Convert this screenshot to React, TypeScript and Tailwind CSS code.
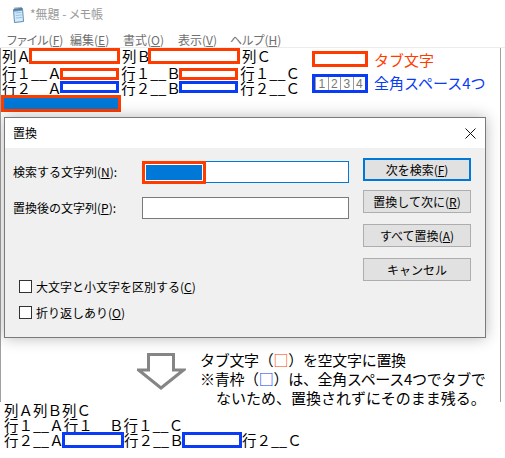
import type { ReactNode } from 'react'

const RED = 'border-[#ff3c00]'

function NotepadIcon() {
  return (
    <svg width="15" height="17" viewBox="0 0 15 17" aria-hidden="true">
      <path d="M3.5 3.5 L12.5 2.5 L13.5 15.5 L4.5 16.5 Z" fill="#d4ecfa" stroke="#5b8db5" />
      <path d="M5.5 7 L11.5 6.4 M5.7 9.5 L11.7 8.9 M5.9 12 L11.9 11.4" stroke="#8ab4d4" strokeWidth="0.8" />
      <path d="M3.5 3.5 L12.5 2.5 L12.7 4.8 L3.7 5.8 Z" fill="#6f9cc2" />
      <path d="M5 1.5 V4.5 M7 1.3 V4.3 M9 1.1 V4.1 M11 0.9 V3.9" stroke="#38566f" strokeWidth="0.9" />
    </svg>
  )
}

function CloseIcon() {
  return (
    <svg width="11" height="11" viewBox="0 0 11 11" aria-hidden="true">
      <path d="M0.5 0.5 L10.5 10.5 M10.5 0.5 L0.5 10.5" stroke="#111" strokeWidth="1" />
    </svg>
  )
}

function DownArrow() {
  return (
    <svg width="49" height="37" viewBox="0 0 49 37" aria-hidden="true">
      <path d="M11.5 1.5 H36.5 V17 H46.5 L24 35 L1.5 17 H11.5 Z" fill="none" stroke="#858585" strokeWidth="3" strokeLinejoin="miter" />
    </svg>
  )
}

function Button({ children, primary }: { children: ReactNode; primary?: boolean }) {
  return (
    <div
      className={
        primary
          ? 'flex h-[23px] w-[108px] items-center justify-center border-2 border-[#0078d7] bg-[#e1e1e1] text-[12px]'
          : 'flex h-[23px] w-[108px] items-center justify-center border border-[#adadad] bg-[#e1e1e1] text-[12px]'
      }
    >
      {children}
    </div>
  )
}

function Checkbox({ children }: { children: ReactNode }) {
  return (
    <div className="flex h-[13px] items-center pl-[14px] text-[12px]">
      <span className="h-[13px] w-[13px] border border-[#333] bg-white" />
      <span className="ml-[4px]">{children}</span>
    </div>
  )
}

export default function App() {
  return (
    <div className="h-[458px] w-[505px] overflow-hidden bg-white font-['Noto_Sans_CJK_JP','Liberation_Sans',sans-serif] text-black">
      {/* title bar */}
      <div className="flex h-[28px] items-center pl-[10px]">
        <NotepadIcon />
        <span className="ml-[5px] text-[12px] text-[#9a9a9a] [font-feature-settings:'palt']">*無題 - メモ帳</span>
      </div>

      {/* menu */}
      <div className="flex h-[20px] items-end border-b border-[#ececec] pl-[7px] text-[12px] leading-[15px] whitespace-nowrap text-[#707070] [font-feature-settings:'palt']">
        <span className="w-[63px]">ファイル(<u>F</u>)</span>
        <span className="w-[53px]">編集(<u>E</u>)</span>
        <span className="w-[55px]">書式(<u>O</u>)</span>
        <span className="w-[52px]">表示(<u>V</u>)</span>
        <span>ヘルプ(<u>H</u>)</span>
      </div>

      {/* editor area */}
      <div className="flex h-[354px] w-[501px] flex-col border-x border-[#a0a0a0]">
        <div className="flex shrink-0">
          <div className="flex w-[299px] shrink-0 flex-col text-[14.5px] whitespace-nowrap">
            <div className="flex h-[17px] items-center leading-none">
              <span className="w-[28px] pl-[1px]">列Ａ</span>
              <span className={`h-[16px] w-[91px] self-start border-[3px] ${RED}`} />
              <span className="w-[28px] pl-[2px]">列Ｂ</span>
              <span className={`h-[16px] w-[92px] self-start border-[3px] ${RED}`} />
              <span className="pl-[2px]">列Ｃ</span>
            </div>
            <div className="flex h-[15px] leading-[15px]">
              <span className="w-[59px] pl-[1px]">行１__Ａ</span>
              <span className={`mt-[3px] h-[12px] w-[60px] border-[3px] ${RED}`} />
              <span className="w-[60px] pl-[2px]">行１__Ｂ</span>
              <span className={`mt-[3px] h-[12px] w-[60px] border-[3px] ${RED}`} />
              <span className="pl-[2px]">行１__Ｃ</span>
            </div>
            <div className="flex h-[15px] leading-[15px]">
              <span className="w-[59px] pl-[1px]">行２__Ａ</span>
              <span className="mt-[1px] h-[12px] w-[60px] border-[3px] border-[#0a3cf5]" />
              <span className="w-[60px] pl-[2px]">行２__Ｂ</span>
              <span className="mt-[1px] h-[12px] w-[60px] border-[3px] border-[#0a3cf5]" />
              <span className="pl-[2px]">行２__Ｃ</span>
            </div>
            <div className="flex h-[17px]">
              <span className={`h-[17px] w-[120px] border-[3px] ${RED} bg-[#0078d7]`} />
            </div>
          </div>

          {/* legend */}
          <div className="flex flex-col pl-[12px] pt-[3px] whitespace-nowrap">
            <div className="flex h-[16px] items-center">
              <span className={`h-[16px] w-[56px] border-[3px] ${RED}`} />
              <span className="ml-[6px] pt-[3px] text-[15px] text-[#ff3c00]">タブ文字</span>
            </div>
            <div className="mt-[7px] flex h-[19px] items-center">
              <span className="flex h-[19px] w-[56px] border-[3px] border-[#0a3cf5] bg-white">
                {['1', '2', '3', '4'].map((d) => (
                  <span
                    key={d}
                    className="flex flex-1 items-center justify-center border-l border-[#9a9a9a] font-['Liberation_Sans',sans-serif] text-[12px] leading-none text-[#777]"
                  >
                    {d}
                  </span>
                ))}
              </span>
              <span className="ml-[6px] text-[15px] text-[#0a3cf5]">全角スペース4つ</span>
            </div>
          </div>
        </div>

        {/* replace dialog */}
        <div className="ml-[3px] mt-[5px] flex h-[221px] w-[482px] shrink-0 flex-col border border-[#7a7a7a] bg-[#f0f0f0] shadow-[0_0_14px_rgba(0,0,0,0.28)]">
          <div className="flex h-[30px] shrink-0 items-center justify-between bg-white pl-[8px] pr-[9px] text-[12px]">
            <span>置換</span>
            <CloseIcon />
          </div>
          <div className="flex flex-1">
            <div className="flex w-[358px] flex-col">
              <div className="mt-[13px] flex h-[22px] items-center pl-[8px] text-[12px]">
                <span className="w-[129px]">
                  検索する文字列(<u>N</u>):
                </span>
                <div className="flex h-[22px] w-[207px] border border-[#0078d7] bg-white">
                  <span className={`-ml-px -mt-px h-[23px] w-[64px] border-[3px] ${RED} bg-white p-px`}>
                    <span className="block h-full w-full bg-[#0078d7]" />
                  </span>
                </div>
              </div>
              <div className="mt-[14px] flex h-[22px] items-center pl-[8px] text-[12px]">
                <span className="w-[129px]">
                  置換後の文字列(<u>P</u>):
                </span>
                <div className="h-[22px] w-[207px] border border-[#7a7a7a] bg-white" />
              </div>
              <div className="mt-[61px]">
                <Checkbox>
                  大文字と小文字を区別する(<u>C</u>)
                </Checkbox>
              </div>
              <div className="mt-[13px]">
                <Checkbox>
                  折り返しあり(<u>O</u>)
                </Checkbox>
              </div>
            </div>
            <div className="flex flex-col">
              <div className="mt-[10px]">
                <Button primary>
                  次を検索(<u>F</u>)
                </Button>
              </div>
              <div className="mt-[9px]">
                <Button>
                  置換して次に(<u>R</u>)
                </Button>
              </div>
              <div className="mt-[11px]">
                <Button>
                  すべて置換(<u>A</u>)
                </Button>
              </div>
              <div className="mt-[11px]">
                <Button>キャンセル</Button>
              </div>
            </div>
          </div>
        </div>

        {/* note */}
        <div className="mt-[12px] flex shrink-0 whitespace-nowrap">
          <div className="ml-[136px] mt-[3px]">
            <DownArrow />
          </div>
          <div className="ml-[14px] text-[15px] leading-[19px]">
            <p className="tracking-[-0.3px]">
              タブ文字（<span className="text-[#ff3c00]">□</span>）を空文字に置換
            </p>
            <p className="tracking-[-0.3px]">
              ※青枠（<span className="text-[#0a3cf5]">□</span>）は、全角スペース4つでタブで
            </p>
            <p className="pl-[16px]">ないため、置換されずにそのまま残る。</p>
          </div>
        </div>
      </div>

      {/* result */}
      <div className="flex flex-col text-[14.5px] leading-[15px] whitespace-nowrap">
        <div className="h-[15px] pl-[4px]">列Ａ列Ｂ列Ｃ</div>
        <div className="h-[15px] pl-[4px]">
          行１__Ａ行１<span className="text-transparent">__</span>Ｂ行１__Ｃ
        </div>
        <div className="flex h-[15px]">
          <span className="w-[62px] pl-[4px]">行２__Ａ</span>
          <span className="h-[16px] w-[62px] border-[3px] border-[#0a3cf5]" />
          <span className="w-[58px]">行２__Ｂ</span>
          <span className="h-[16px] w-[60px] border-[3px] border-[#0a3cf5]" />
          <span>行２__Ｃ</span>
        </div>
      </div>
    </div>
  )
}
